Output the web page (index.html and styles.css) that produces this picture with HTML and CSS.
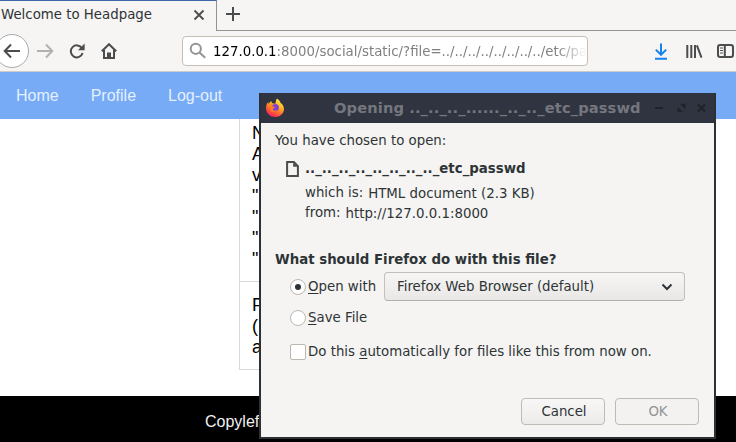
FILE: index.html
```html
<!DOCTYPE html>
<html lang="en">
<head>
<meta charset="utf-8">
<title>Welcome to Headpage</title>
<link rel="stylesheet" href="styles.css">
</head>
<body>
<div class="tabs">
  <div class="tab"><span class="tab-title">Welcome to Headpage</span>
    <svg class="tab-close" width="12" height="12" viewBox="0 0 12 12"><path d="M1.500 1.500l9 9M10.500 1.500l-9 9"/></svg>
  </div>
  <div class="new-tab"><svg width="16" height="16" viewBox="0 0 16 16"><path d="M8 1v14M1 8h14"/></svg></div>
</div>
<div class="toolbar">
  <div class="back"><svg width="18" height="16" viewBox="0 0 18 16"><path d="M17 8H2M8 1.500L1.700 8 8 14.500"/></svg></div>
  <svg class="forward" width="18" height="16" viewBox="0 0 18 16"><path d="M1 8h15M10 1.500L16.300 8 10 14.500"/></svg>
  <svg class="reload" width="16" height="16" viewBox="0 0 16 16"><path class="line" d="M13 5.300A6 6 0 1 0 13.600 10"/><path class="solid" d="M15.600 .6v6.700H9z"/></svg>
  <svg class="home" width="16" height="16" viewBox="0 0 16 16"><path class="line" d="M.8 8.300L8 1.200l7.200 7.100M3 7v8h10V7"/><path class="solid" d="M6 15V9.500h4V15z"/></svg>
  <div class="urlbar">
    <svg width="18" height="18" viewBox="0 0 18 18"><circle cx="6.800" cy="6.800" r="5.100"/><path d="M10.500 10.500l5.700 5.300"/></svg>
    <span class="url"><b>127.0.0.1</b>:8000/social/static/?file=../../../../../../../../etc/pa</span>
  </div>
  <svg class="download" width="14" height="17" viewBox="0 0 14 17"><path d="M7 .5v11M1.800 6.600L7 11.800l5.200-5.200M1 15.700h12"/></svg>
  <svg class="library" width="17" height="15" viewBox="0 0 17 15"><path d="M1.300 1v13M5.300 1v13M9 1v13M10.900 1.300l4.600 12.400"/></svg>
  <svg class="sidebar" width="17" height="14" viewBox="0 0 17 14"><rect x="1" y="1" width="15" height="12" rx="2.200"/><path d="M7.800 1v12"/><path class="thin" d="M3 4h3M3 6.500h3M3 9h3"/></svg>
</div>
<nav class="nav"><span class="n1">Home</span><span class="n2">Profile</span><span class="n3">Log-out</span></nav>
<main class="page">
  <div class="post first">N<br>A<br>v<br>"<br>"<br>"<br>"</div>
  <div class="post">P<br>(<br>a</div>
</main>
<footer class="footer">Copyleft</footer>

<div class="dialog">
  <div class="titlebar">
    <svg class="firefox" width="20" height="20" viewBox="0 0 20 20">
      <defs>
        <linearGradient id="fire" x1=".8" y1="0" x2=".25" y2="1"><stop offset="0" stop-color="#fff04a"/><stop offset=".4" stop-color="#ffad25"/><stop offset=".7" stop-color="#ff5a35"/><stop offset="1" stop-color="#ed1b69"/></linearGradient>
      </defs>
      <path fill="url(#fire)" d="M12 .6c2.300 1.700 3.200 3 3.600 4.400 2.400 1.500 3.700 4.200 3.300 7C18.200 16.300 14.500 19 10 19S1.400 15.600 1 11C.8 8.300 1.800 5.500 3.200 4c0 1 .2 1.500.6 1.900C4.400 4.500 5.300 3.600 6.300 3c0 1 .4 1.700 1 2.200l3.200.6C10.800 3.700 11 2 12 .6z"/>
      <path fill="#ff8a1c" d="M2.500 7.500c2-2.200 4.500-1.800 6-.6L7 9l-2.500.5z"/>
      <circle cx="10.400" cy="9.500" r="3.500" fill="#8243cf"/>
      <path fill="#ff7a2c" d="M5 9c1.500-1 3.200-.8 5 .1-.3 1.300-2 1.200-2.200 2.300.6 1.500 2.600 1.600 4 .7-1.200 2.900-6.300 2.700-6.800-.9z"/>
    </svg>
    <span class="title">Opening .._.._.._......_.._.._etc_passwd</span>
    <svg class="controls" width="52" height="10" viewBox="0 0 52 10"><path d="M0 5h8M43 1.500l7 7M50 1.500l-7 7"/><path class="solid" d="M25 .8h5.500v5.500zM22.500 3.700V9.200H28z"/></svg>
  </div>
  <div class="body">
    <p class="intro">You have chosen to open:</p>
    <div class="file">
      <svg width="13" height="16" viewBox="0 0 13 16"><path d="M1.100 1.100h6.800l4 4v9.800H1.100z"/><path class="solid" d="M7.200 1.500v4.300h4.300z"/></svg>
      <strong>.._.._.._.._.._.._.._.._etc_passwd</strong>
    </div>
    <div class="meta type"><span>which is:</span><span class="value">HTML document (2.3 KB)</span></div>
    <div class="meta from"><span>from:</span><span class="value">http://127.0.0.1:8000</span></div>
    <p class="question">What should Firefox do with this file?</p>
    <div class="option open"><i class="radio on"></i><span class="label"><u>O</u>pen with</span>
      <div class="select"><span>Firefox Web Browser (default)</span><svg width="12" height="8" viewBox="0 0 12 8"><path d="M1.500 1.500L6 6l4.500-4.500"/></svg></div>
    </div>
    <div class="option save"><i class="radio"></i><span><u>S</u>ave File</span></div>
    <div class="option auto"><i class="check"></i><span>Do this <u>a</u>utomatically for files like this from now on.</span></div>
    <div class="buttons"><div class="button">Cancel</div><div class="button disabled">OK</div></div>
  </div>
</div>
</body>
</html>
```
FILE: styles.css
```css
* { box-sizing: border-box; }
html, body { width: 736px; height: 442px; overflow: hidden; }
body { margin: 0; position: relative; background: #fff; color: #2e3436; font: 13.33px/20px "DejaVu Sans", sans-serif; white-space: nowrap; }
p { margin: 0; }
svg { display: block; flex: none; fill: none; stroke: #4b4c4d; stroke-width: 2; }
svg .solid { fill: #4b4c4d; stroke: none; }

.tabs { display: flex; height: 31px; background: #f6f5f4; }
.tab { width: 217px; display: flex; align-items: center; border-top: 1px solid #3f66ad; border-right: 1px solid #929292; padding: 0 11px 2px 1px; justify-content: space-between; }
.tab-close { stroke-width: 1.8; }
.new-tab { flex: 1; border-bottom: 1px solid #929292; padding: 6px 0 0 8px; }

.toolbar { height: 41px; display: flex; align-items: center; background: #f6f5f4; border-bottom: 1px solid #cfcac5; }
.back { width: 34px; height: 34px; margin-left: -5px; flex: none; border: 1px solid #aaa; border-radius: 50%; background: #fff; display: flex; align-items: center; justify-content: center; }
.forward { margin-left: 7px; stroke: #b1b1b0; }
.reload { margin-left: 15px; }
.home { margin-left: 16px; }
.urlbar { width: 406px; height: 30px; margin-left: 65px; flex: none; display: flex; align-items: center; border: 1px solid #c5bfb8; border-radius: 4px; background: #fff; padding: 0 2px 0 6px; }
.urlbar svg { stroke: #949494; }
.url { flex: 1; margin-left: 6px; padding-top: 2px; color: #808080; -webkit-mask-image: linear-gradient(to left, transparent 0, #000 30px); mask-image: linear-gradient(to left, transparent 0, #000 30px); }
.url b { color: #000; font-weight: 400; }
.download { margin-left: 66px; stroke: #1683ed; }
.library { margin-left: 18px; }
.sidebar { margin-left: 14px; }
.sidebar .thin { stroke-width: 1; }

.nav { height: 47px; background: #77abf5; color: #e4f0ff; display: flex; align-items: center; padding: 0 0 0 16px; font: 16px/20px "Liberation Sans", sans-serif; }
.n2 { margin-left: 32px; }
.n3 { margin-left: 32px; }

.page { height: 277px; padding-left: 239px; color: #000; font: 18px/21px "Liberation Sans", sans-serif; }
.post { width: 300px; height: 88px; padding: 13px 12px; border: 1px solid #d9d9d9; border-top: 0; }
.post.first { height: 163px; padding-top: 4px; }
.footer { height: 46px; background: #000; color: #f0f0f0; padding: 16px 0 0 205px; font: 16px/20px "Liberation Sans", sans-serif; }

.dialog { position: absolute; left: 259px; top: 93px; width: 457px; height: 346px; border: 2px solid #2d3136; border-top: 0; background: #f5f4f3; display: flex; flex-direction: column; }
.titlebar { height: 30px; flex: none; background: #303440; display: flex; align-items: center; padding: 0 7px 0 4px; }
.firefox { stroke: none; }
.title { margin-left: 49px; flex: 1; color: #74777d; font-weight: 700; font-size: 14.67px; letter-spacing: .11px; }
.controls { stroke: #1e2229; }
.controls .solid { fill: #1e2229; }
.body { flex: 1; padding: 8px 15px 12px 14px; display: flex; flex-direction: column; }
.file { display: flex; align-items: center; height: 20px; margin: 8px 0 0 11px; }
.file strong { margin-left: 6px; }
.meta { display: flex; margin-left: 30px; height: 20px; }
.type { margin-top: 4px; }
.value { margin-left: 5px; position: relative; top: 1px; }
.question { margin-top: 27px; font-weight: 700; }
.option { display: flex; align-items: center; margin-left: 15px; }
.option u { text-underline-offset: 2px; text-decoration-thickness: 1px; }
.radio, .check { width: 16px; height: 16px; margin-right: 2px; flex: none; background: #fff; border: 1px solid #bdb7b1; border-radius: 50%; display: flex; align-items: center; justify-content: center; }
.check { border-radius: 2px; }
.on::after { content: ""; width: 6px; height: 6px; border-radius: 50%; background: #2e3436; }
.open { height: 29px; margin-top: 2px; }
.label { width: 76px; }
.select { width: 301px; height: 29px; display: flex; align-items: center; justify-content: space-between; padding: 0 11px 0 12px; border: 1px solid #c4bfba; border-bottom-color: #b5afa9; border-radius: 4px; background: linear-gradient(#f6f5f4, #eae8e6); }
.select svg { stroke: #2e3436; }
.save { height: 20px; margin-top: 7px; }
.auto { height: 20px; margin-top: 14px; }
.buttons { display: flex; justify-content: flex-end; gap: 10px; margin-top: auto; }
.button { width: 84px; height: 27px; border: 1px solid #c0bab5; border-radius: 4px; background: linear-gradient(#f8f7f6, #edebe9); padding-left: 2px; text-align: center; line-height: 25px; }
.disabled { color: #929595; background: #f3f2f0; }
```
